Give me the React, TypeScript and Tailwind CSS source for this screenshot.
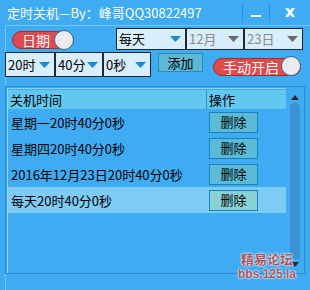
import React from 'react'

const font = { fontFamily: '"Noto Sans CJK SC", "Liberation Sans", sans-serif' }

function Arrow({ color }: { color: string }) {
  return (
    <svg width="11" height="6" viewBox="0 0 11 6">
      <path d="M0 0 L11 0 L5.5 6 Z" fill={color} />
    </svg>
  )
}

function Select({ label, w, h, disabled }: { label: string; w: string; h: string; disabled?: boolean }) {
  return (
    <div
      className={`${w} ${h} flex items-center justify-between bg-[#d8eefc] border border-[#1e2a33] pl-[2px] pr-[4px] text-[13px] ${
        disabled ? 'text-[#8a8a8a]' : 'text-black'
      }`}
    >
      <span className="leading-none">{label}</span>
      <Arrow color={disabled ? '#6a6a6a' : '#1a8ad0'} />
    </div>
  )
}

function Toggle({ label, w }: { label: string; w: string }) {
  return (
    <div className={`relative ${w} h-[19px] flex items-center`}>
      <div className="h-[18px] w-full rounded-full bg-[#e04a4a] border border-[#a82a2a] flex items-center pl-[9px] text-white text-[14px] leading-none">
        {label}
      </div>
      <div className="absolute right-0 top-[-1px] w-[20px] h-[20px] rounded-full bg-[#ececf0] border border-[#2a6a90]" />
    </div>
  )
}

const rows = ['星期一20时40分0秒', '星期四20时40分0秒', '2016年12月23日20时40分0秒', '每天20时40分0秒']

export default function App() {
  return (
    <div className="w-[310px] h-[290px] bg-[#3eabf2] overflow-hidden relative" style={font}>
      <div className="h-[25px] flex items-center">
        <span className="pl-[7px] text-white text-[13px] leading-none">定时关机—By：峰哥QQ30822497</span>
        <div className="ml-auto flex items-center h-full">
          <div className="w-px h-[18px] bg-[#2f8fd0]" />
          <div className="w-[26px] flex justify-center">
            <div className="w-[10px] h-[2px] bg-white mt-[6px]" />
          </div>
          <div className="w-px h-[18px] bg-[#2f8fd0]" />
          <div
            className="w-[40px] flex justify-center text-white font-bold text-[16px] leading-none pb-[2px]"
            style={{ fontFamily: '"DejaVu Sans", sans-serif' }}
          >
            x
          </div>
        </div>
      </div>

      <div className="ml-[5px] border-l border-t border-[#74c8f6] h-[265px]">
        <div className="flex items-center pt-[1px] h-[24px]">
          <div className="ml-[6px] mt-[3px]">
            <Toggle label="日期" w="w-[62px]" />
          </div>
          <div className="ml-[42px] flex">
            <Select label="每天" w="w-[70px]" h="h-[22px]" />
            <Select label="12月" w="w-[58px]" h="h-[22px]" disabled />
            <Select label="23日" w="w-[59px]" h="h-[22px]" disabled />
          </div>
        </div>

        <div className="flex mt-[2px] ml-[-1px] h-[25px]">
          <Select label="20时" w="w-[50px]" h="h-[25px]" />
          <Select label="40分" w="w-[48px]" h="h-[25px]" />
          <Select label="0秒" w="w-[48px]" h="h-[25px]" />
          <div className="ml-[7px] mt-[1px] w-[45px] h-[19px] bg-[#5db8d6] border border-[#2a8ab8] flex items-center justify-center text-[13px] text-black">
            添加
          </div>
          <div className="ml-[10px] mt-[5px]">
            <Toggle label="手动开启" w="w-[88px]" />
          </div>
        </div>

        <div className="mt-[9px] ml-[-1px] w-[300px] h-[188px] border border-[#2d88c8] flex">
          <div className="flex-1 border-l border-t border-[#8bd3f8] ml-px mt-px">
            <div className="flex h-[19px] bg-[#62c8f0] text-[13px] text-black leading-none mt-px">
              <div className="w-[199px] flex items-center pl-[2px] border-r border-[#3a8fb8]">关机时间</div>
              <div className="flex-1 flex items-center pl-[2px]">操作</div>
            </div>
            {rows.map((r, i) => (
              <div key={r} className={`flex h-[26px] items-center ${i === 3 ? 'bg-[#7ecbf6]' : ''}`}>
                <div className="w-[200px] pl-[3px] text-[13px] text-black leading-none whitespace-nowrap">{r}</div>
                <div
                  className={`ml-[1px] w-[49px] h-[21px] border border-[#1a80c0] flex items-center justify-center text-[13px] text-black ${
                    i === 3 ? 'bg-[#88d2d6]' : 'bg-[#5bbad6]'
                  }`}
                >
                  删除
                </div>
              </div>
            ))}
          </div>
          <div className="w-[18px] flex flex-col items-center pt-[8px] relative">
            <svg width="8" height="5" viewBox="0 0 8 5">
              <path d="M0 5 L4 0 L8 5 Z" fill="#2a2a2a" />
            </svg>
            <div className="mt-[3px] w-[10px] flex-1 mb-[14px] bg-[#3a92d2] rounded-t-[5px]" />
            <svg className="absolute bottom-[6px]" width="8" height="5" viewBox="0 0 8 5">
              <path d="M0 0 L8 0 L4 5 Z" fill="#2a2a2a" />
            </svg>
          </div>
        </div>
      </div>

      <div
        className="absolute right-[14px] bottom-[10px] flex flex-col items-center gap-[3px] text-[#a85560] font-bold"
        style={{ textShadow: '0 0 2px #e8f4ff, 0 0 2px #e8f4ff, 0 0 1px #e8f4ff' }}
      >
        <span className="block text-[13px] leading-[13px]">精易论坛</span>
        <span className="block text-[12px] leading-[12px]" style={{ fontFamily: '"Liberation Sans", sans-serif' }}>
          bbs.125.la
        </span>
      </div>
    </div>
  )
}
